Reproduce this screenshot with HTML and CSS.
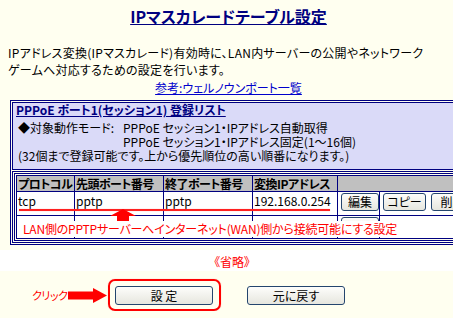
FILE: index.html
```html
<!DOCTYPE html>
<html lang="ja">
<head>
  <meta charset="UTF-8">
  <title>IPマスカレードテーブル設定</title>
  <link rel="stylesheet" href="styles.css">
</head>
<body>
  <div class="page">
    <h1 class="title">IPマスカレードテーブル設定</h1>
    <p class="lead">IPアドレス変換(IPマスカレード)有効時に、LAN内サーバーの公開やネットワーク<br>ゲームへ対応するための設定を行います。</p>
    <p class="ref"><a href="#">参考:ウェルノウンポート一覧</a></p>
  </div>

  <div class="box">
    <div class="info">
      <div class="info-head">PPPoE ポート1(セッション1) 登録リスト</div>
      <div class="info-text"><span class="info-label">◆対象動作モード:</span>PPPoE セッション1・IPアドレス自動取得<br><span class="info-label"></span>PPPoE セッション1・IPアドレス固定(1～16個)<br>(32個まで登録可能です。上から優先順位の高い順番になります。)</div>
    </div>
    <div class="list-cell">
      <div class="list">
        <table class="list-table">
          <colgroup>
            <col class="c-proto">
            <col class="c-port">
            <col class="c-port">
            <col class="c-ip">
            <col class="c-edit">
            <col class="c-more">
          </colgroup>
          <tr class="head">
            <th>プロトコル</th>
            <th>先頭ポート番号</th>
            <th>終了ポート番号</th>
            <th>変換IPアドレス</th>
            <th colspan="2"></th>
          </tr>
          <tr class="row">
            <td>tcp</td>
            <td>pptp</td>
            <td>pptp</td>
            <td>192.168.0.254</td>
            <td><button class="btn btn-edit">編集</button></td>
            <td><button class="btn btn-copy">コピー</button><button class="btn btn-del">削除</button></td>
          </tr>
          <tr class="row row-empty">
            <td></td>
            <td></td>
            <td></td>
            <td></td>
            <td><button class="btn btn-edit" aria-label="編集"></button></td>
            <td></td>
          </tr>
        </table>
      </div>
    </div>

    <!-- annotations drawn over the table -->
    <div class="mark-line"></div>
    <svg class="mark-arrow" width="26" height="14" viewBox="0 0 26 14">
      <path d="M13 0 L26 7 L19 7 L19 14 L7 14 L7 7 L0 7 Z" fill="#ff0000"/>
    </svg>
    <div class="note">LAN側のPPTPサーバーへインターネット(WAN)側から接続可能にする設定</div>
  </div>

  <div class="omit">《省略》</div>

  <div class="actions">
    <span class="click-label">クリック</span>
    <svg class="click-arrow" width="39" height="15" viewBox="0 0 39 15">
      <rect x="0" y="3.5" width="27" height="8" fill="#ff0000"/>
      <path d="M25 0 L39 7.5 L25 15 Z" fill="#ff0000"/>
    </svg>
    <div class="highlight">
      <button class="btn btn-wide">設 定</button>
    </div>
    <button class="btn btn-wide btn-back">元に戻す</button>
  </div>
</body>
</html>
```

FILE: styles.css
```css
html, body {
  margin: 0;
  background-color: #fffff0;
  overflow: hidden;
}

body {
  font-family: "Noto Sans CJK JP", "Liberation Sans", sans-serif;
  font-size: 12px;
  font-feature-settings: "palt";
  color: #000;
  width: 453px;
}

.page {
  width: 441px;
  padding-left: 8px;
}

.title {
  margin: 6px 0 0;
  font-size: 16px;
  line-height: 20px;
  text-align: center;
  color: #000080;
  text-decoration: underline;
}

.lead {
  margin: 18px 0 0;
  line-height: 17px;
  letter-spacing: 0.25px;
  white-space: nowrap;
}

.ref {
  margin: 1px 0 0;
  line-height: 17px;
  text-align: center;
}

.ref a {
  color: #0000cc;
}

.box {
  position: relative;
  margin: 4px 0 0 10px;
  width: 480px;
  border: 1px solid #000080;
  padding: 1px;
}

.info {
  border: 1px solid #000080;
  background-color: #dadaf8;
  padding: 0 0 6px 3px;
  white-space: nowrap;
}

.info-head {
  line-height: 14px;
  margin-bottom: 4px;
  font-weight: bold;
  color: #000080;
  text-decoration: underline;
}

.info-text {
  line-height: 14px;
  padding-left: 2px;
}

.info-label {
  display: inline-block;
  width: 105px;
}

.list-cell {
  margin-top: 1px;
  border: 1px solid #000080;
  padding: 1px;
}

.list {
  border: 1px solid #000080;
  padding: 1px;
}

.list-table {
  border-collapse: collapse;
  table-layout: fixed;
  width: 469px;
}

.c-proto { width: 58px; }
.c-port { width: 89px; }
.c-ip { width: 85px; }
.c-edit { width: 42px; }

.list-table th,
.list-table td {
  border: 1px solid #000080;
  padding: 0 0 0 1px;
  text-align: left;
  vertical-align: top;
  white-space: nowrap;
  overflow: hidden;
}

.list-table th {
  background-color: #c0c0c0;
  height: 15px;
  line-height: 15px;
  letter-spacing: -0.5px;
}

.list-table td {
  background-color: #fff;
  height: 23px;
  line-height: 18px;
}

.list-table .row-empty td {
  height: 20px;
}

.btn {
  font-family: inherit;
  font-size: 12px;
  font-feature-settings: "palt";
  height: 18px;
  padding: 0;
  border: 1px solid #24456e;
  border-radius: 3px;
  background: linear-gradient(#fdfdfb, #e6e6de);
  color: #000;
  line-height: 16px;
}

.btn-edit {
  width: 38px;
  margin: 1px 0 0 2px;
}

.btn-copy {
  width: 43px;
  margin: 1px 0 0 2px;
}

.btn-del {
  width: 43px;
  margin: 1px 0 0 5px;
}

.mark-line {
  position: absolute;
  left: 8px;
  top: 108px;
  width: 311px;
  height: 2px;
  background-color: #ff2020;
  box-shadow: 0 0 1px #ff8080;
}

.mark-arrow {
  position: absolute;
  left: 99px;
  top: 108px;
}

.note {
  position: absolute;
  left: 9px;
  top: 120px;
  width: 378px;
  height: 16px;
  padding-left: 3px;
  background-color: #fff;
  color: #ff0000;
  line-height: 16px;
  letter-spacing: -0.2px;
  white-space: nowrap;
}

.omit {
  margin-top: 5px;
  height: 21px;
  box-sizing: border-box;
  padding: 3px 0 0 11px;
  line-height: 18px;
  background-color: #fff;
  color: #ff0000;
  text-align: center;
}

.actions {
  display: flex;
  align-items: center;
  padding: 8px 0 0 32px;
}

.click-label {
  width: 36px;
  font-size: 11px;
  letter-spacing: -0.5px;
  color: #ff0000;
  white-space: nowrap;
}

.click-arrow {
  display: block;
}

.highlight {
  margin-left: 1px;
  border: 2px solid #ff0000;
  border-radius: 7px;
  padding: 5px 6px 4px 5px;
  box-shadow: 0 0 1px #ff9090;
}

.btn-wide {
  display: block;
  width: 98px;
  height: 19px;
  line-height: 17px;
}

.btn-back {
  margin-left: 26px;
}
```
